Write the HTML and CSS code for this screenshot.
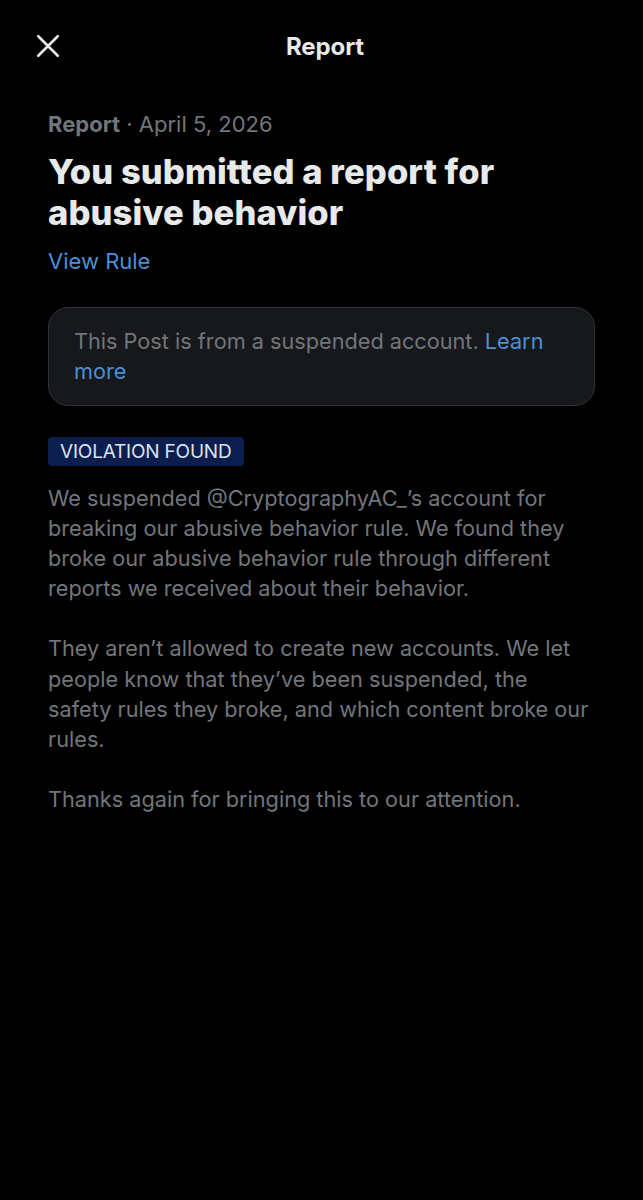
FILE: index.html
```html
<!DOCTYPE html>
<html lang="en">
<head>
<meta charset="utf-8">
<link rel="stylesheet" href="styles.css">
</head>
<body>
<div class="screen">
  <header class="topbar">
    <button class="close" aria-label="Close">
      <svg viewBox="0 0 24 24" width="26" height="26"><path d="M3 3 L21 21 M21 3 L3 21" stroke="#e7e9ea" stroke-width="2.4" stroke-linecap="round" fill="none"/></svg>
    </button>
    <h1 class="topbar-title">Report</h1>
    <span class="spacer"></span>
  </header>
  <main class="content">
    <p class="meta"><span class="meta-strong">Report</span> · April 5, 2026</p>
    <h2 class="title">You submitted a report for abusive behavior</h2>
    <a class="link view-rule" href="#">View Rule</a>
    <div class="notice">This Post is from a suspended account. <a class="link" href="#">Learn more</a></div>
    <span class="badge">VIOLATION FOUND</span>
    <div class="body">
      <p>We suspended @CryptographyAC_’s account for breaking our abusive behavior rule. We found they broke our abusive behavior rule through different reports we received about their behavior.</p>
      <p>They aren’t allowed to create new accounts. We let people know that they’ve been suspended, the safety rules they broke, and which content broke our rules.</p>
      <p>Thanks again for bringing this to our attention.</p>
    </div>
  </main>
</div>
</body>
</html>
```
FILE: styles.css
```css
html, body {
  margin: 0;
  padding: 0;
  background: #000;
}
body {
  font-family: "Inter", "Noto Sans", "Liberation Sans", sans-serif;
  color: #e7e9ea;
}
.screen {
  width: 643px;
  min-height: 1200px;
  background: #000;
}
.topbar {
  display: flex;
  align-items: center;
  justify-content: space-between;
  height: 46px;
  padding: 23px 28px 0 35px;
}
.close {
  background: none;
  border: 0;
  padding: 0;
  width: 26px;
  height: 26px;
  display: flex;
}
.topbar-title {
  margin: 0;
  font-size: 24px;
  font-weight: 700;
  color: #e7e9ea;
  letter-spacing: -0.1px;
}
.spacer { width: 26px; }
.content {
  padding: 40px 48px 0 48px;
  display: flex;
  flex-direction: column;
  align-items: flex-start;
}
.meta {
  margin: 0;
  font-size: 22px;
  line-height: 30px;
  color: #71767b;
}
.meta-strong { font-weight: 700; }
.title {
  margin: 12px 0 0;
  width: 520px;
  font-size: 34.5px;
  line-height: 41px;
  font-weight: 800;
  color: #e7e9ea;
  letter-spacing: 0.1px;
}
.link {
  color: #4a90d9;
  text-decoration: none;
}
.view-rule {
  margin-top: 13px;
  font-size: 22px;
  line-height: 30px;
}
.notice {
  box-sizing: border-box;
  margin-top: 31px;
  width: 547px;
  padding: 18px 25px 19px 25px;
  background: #16181c;
  border: 1px solid #2f3336;
  border-radius: 20px;
  font-size: 21.7px;
  line-height: 30px;
  color: #71767b;
}
.badge {
  margin-top: 31px;
  background: #0b1e4e;
  color: #d9e3f5;
  border-radius: 4px;
  padding: 0 13px 0 12px;
  height: 29px;
  line-height: 29px;
  font-size: 19px;
  letter-spacing: -0.2px;
}
.body {
  margin-top: 17px;
  font-size: 21.7px;
  line-height: 30.1px;
  color: #71767b;
}
.body p {
  margin: 0 0 30.1px;
}
```
